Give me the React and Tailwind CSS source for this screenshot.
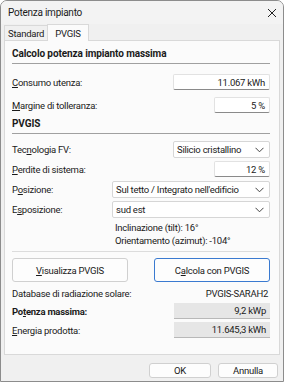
import React from "react";

const U = ({ children }) => <span className="underline">{children}</span>;

const Chevron = () => (
  <svg width="9" height="6" viewBox="0 0 9 6" className="shrink-0">
    <path d="M0.5 0.8 L4.5 4.8 L8.5 0.8" fill="none" stroke="#444" strokeWidth="1" />
  </svg>
);

const Input = ({ value, w }) => (
  <div className={`${w} h-[16px] bg-white border border-[#e2e2e2] border-b-[#8a8a8a] rounded-[2px] flex items-center justify-end px-[4px]`}>
    {value}
  </div>
);

const ReadOnly = ({ value }) => (
  <div className="w-[96px] h-[16px] bg-[#e6e6e6] border-b border-[#b8b8b8] flex items-center justify-end px-[4px]">
    {value}
  </div>
);

const Select = ({ value, w }) => (
  <div className={`${w} h-[17px] bg-white border border-[#d6d6d6] rounded-[2px] flex items-center justify-between pl-[3px] pr-[5px]`}>
    <span className="whitespace-nowrap">{value}</span>
    <Chevron />
  </div>
);

const Row = ({ label, children, bold, cls }) => (
  <div className={`flex items-center justify-between ${cls}`}>
    <span className={bold ? "font-bold" : ""}>{label}</span>
    {children}
  </div>
);

const Section = ({ title, cls }) => (
  <div className={cls}>
    <div className="font-bold text-[10px] tracking-[-0.1px] leading-[14px]">{title}</div>
    <div className="mt-[2px] h-px bg-[#a0a0a0]" />
  </div>
);

export default function App() {
  return (
    <div
      className="w-[284px] h-[382px] bg-[#f0f0f0] border border-[#8c8c8c] rounded-t-[7px] text-[9.5px] tracking-[-0.25px] text-[#1a1a1a] leading-[13px] overflow-hidden flex flex-col"
      style={{ fontFamily: 'Roboto, "Noto Sans", sans-serif' }}
    >
      <div className="h-[23px] flex items-center justify-between pl-[7px] pr-[6px] bg-[#f3f3f3]">
        <span className="text-[10px]">Potenza impianto</span>
        <svg width="10" height="10" viewBox="0 0 10 10">
          <path d="M1 1 L9 9 M9 1 L1 9" stroke="#222" strokeWidth="1" />
        </svg>
      </div>

      <div className="flex items-end h-[16px] pl-[3px]">
        <div className="h-[15px] px-[3px] border border-b-0 border-[#d9d9d9] bg-[#f0f0f0] flex items-center">Standard</div>
        <div className="h-[17px] px-[7px] -ml-px border border-b-0 border-[#d9d9d9] bg-[#fbfbfb] flex items-center relative z-10 translate-y-px">
          PVGIS
        </div>
      </div>

      <div className="mx-[3px] h-[315px] bg-[#fbfbfb] border border-[#d9d9d9] pl-[7px] pr-[9px] pt-[6px]">
        <Section title="Calcolo potenza impianto massima" />

        <Row cls="mt-[10px]" label={<><U>C</U>onsumo utenza:</>}>
          <Input value="11.067 kWh" w="w-[97px]" />
        </Row>
        <Row cls="mt-[7px]" label={<><U>M</U>argine di tolleranza:</>}>
          <Input value="5 %" w="w-[56px]" />
        </Row>

        <Section title="PVGIS" cls="mt-[4px]" />

        <Row cls="mt-[7px]" label={<>Tec<U>n</U>ologia FV:</>}>
          <Select value="Silicio cristallino" w="w-[97px]" />
        </Row>
        <Row cls="mt-[3px]" label={<><U>P</U>erdite di sistema:</>}>
          <Input value="12 %" w="w-[56px]" />
        </Row>
        <Row cls="mt-[4px]" label={<>P<U>o</U>sizione:</>}>
          <Select value="Sul tetto / Integrato nell'edificio" w="w-[158px]" />
        </Row>
        <Row cls="mt-[3px]" label={<>E<U>s</U>posizione:</>}>
          <Select value="sud est" w="w-[158px]" />
        </Row>

        <div className="ml-[103px] mt-[3px]">
          <div>Inclinazione (tilt): 16°</div>
          <div>Orientamento (azimut): -104°</div>
        </div>
        <div className="mt-[4px] h-px bg-[#dcdcdc]" />

        <div className="mt-[6px] flex justify-between">
          <div className="w-[116px] h-[24px] bg-[#fdfdfd] border border-[#d0d0d0] rounded-[3px] flex items-center justify-center">
            <span><U>V</U>isualizza PVGIS</span>
          </div>
          <div className="w-[116px] h-[24px] bg-[#fdfdfd] border border-[#3a7ad0] rounded-[3px] flex items-center justify-center">
            <span>C<U>a</U>lcola con PVGIS</span>
          </div>
        </div>

        <Row cls="mt-[5px] pr-[2px]" label="Database di radiazione solare:">
          <span>PVGIS-SARAH2</span>
        </Row>
        <Row cls="mt-[3px]" bold label={<>Po<U>t</U>enza massima:</>}>
          <ReadOnly value="9,2 kWp" />
        </Row>
        <Row cls="mt-[3px]" label={<><U>E</U>nergia prodotta:</>}>
          <ReadOnly value="11.645,3 kWh" />
        </Row>
      </div>

      <div className="flex justify-end gap-[7px] pr-[5px] pt-[8px]">
        <div className="w-[62px] h-[15px] bg-[#fdfdfd] border border-[#d0d0d0] rounded-[3px] flex items-center justify-center">OK</div>
        <div className="w-[60px] h-[15px] bg-[#fdfdfd] border border-[#d0d0d0] rounded-[3px] flex items-center justify-center">Annulla</div>
      </div>
    </div>
  );
}
